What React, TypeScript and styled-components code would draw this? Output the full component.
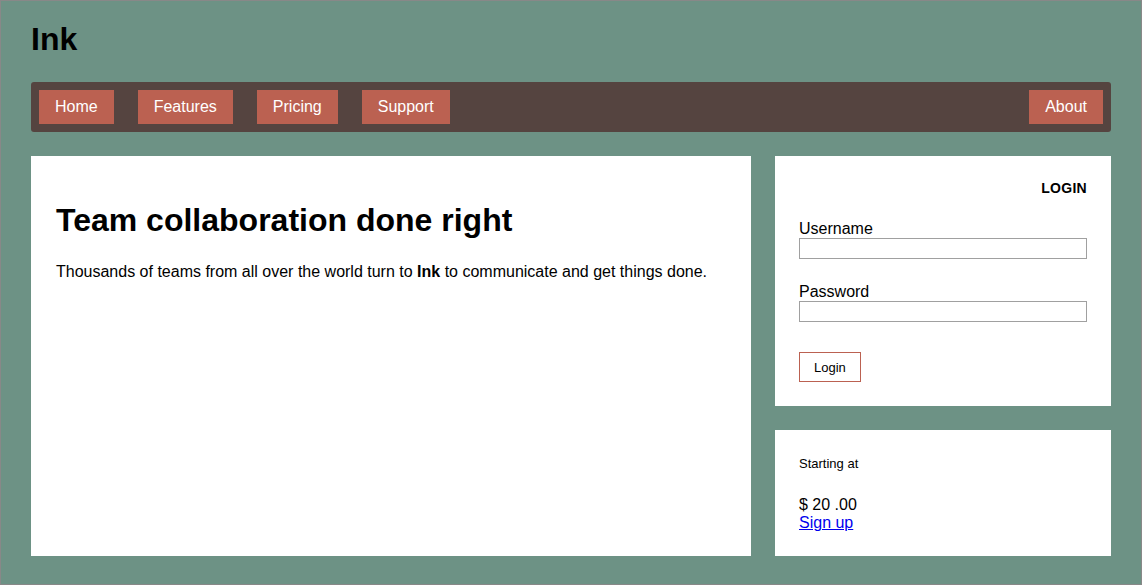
import React from 'react';
import styled, { createGlobalStyle } from 'styled-components';

const GlobalStyle = createGlobalStyle`
  html, body {
    margin: 0;
    padding: 0;
  }
  body {
    font-family: 'Liberation Sans', Arial, sans-serif;
    color: #000;
  }
  * {
    box-sizing: border-box;
  }
`;

const Page = styled.div`
  height: 585px;
  border: 1px solid #888888;
  background: #6d9285;
  padding: 20px 30px 0;
  display: flex;
  flex-direction: column;
  gap: 24px;
`;

const Brand = styled.h1`
  margin: 0;
  font-size: 32px;
  font-weight: bold;
  line-height: 37px;
`;

const NavBar = styled.nav`
  display: flex;
  align-items: center;
  gap: 24px;
  height: 50px;
  padding: 0 8px;
  background: #554440;
  border-radius: 3px;
`;

const NavItem = styled.a<{ $pushRight?: boolean }>`
  display: block;
  height: 34px;
  padding: 0 16px;
  line-height: 34px;
  font-size: 16px;
  color: #fff;
  background: #bb6151;
  text-decoration: none;
  cursor: pointer;
  margin-left: ${(props) => (props.$pushRight ? 'auto' : '0')};
`;

const Main = styled.div`
  display: grid;
  grid-template-columns: 720px 336px;
  grid-template-rows: 400px;
  gap: 24px;
`;

const Card = styled.section<{ $grow?: boolean }>`
  background: #fff;
  padding: 24px;
  flex: ${(props) => (props.$grow ? '1' : 'none')};
`;

const HeroCard = styled(Card)`
  padding: 25px;
`;

const Headline = styled.h2`
  margin: 21px 0 24px;
  font-size: 32px;
  line-height: 37px;
  font-weight: bold;
`;

const Lead = styled.p`
  margin: 0;
  font-size: 16px;
  line-height: 18px;
`;

const Sidebar = styled.div`
  display: flex;
  flex-direction: column;
  gap: 24px;
  min-height: 0;
`;

const CardTitle = styled.h3`
  margin: 0 0 23px;
  text-align: right;
  font-size: 14px;
  line-height: 16px;
  font-weight: bold;
  letter-spacing: 0.3px;
`;

const Field = styled.label`
  display: flex;
  flex-direction: column;
  font-size: 16px;
  line-height: 19px;
  margin-bottom: 23px;
`;

const TextInput = styled.input`
  width: 100%;
  height: 21px;
  margin: 0;
  padding: 1px 3px;
  border: 1px solid #a0a0a0;
  font-family: 'Liberation Sans', Arial, sans-serif;
  font-size: 13px;
`;

const SubmitButton = styled.button`
  display: block;
  margin-top: 30px;
  height: 30px;
  padding: 0 14px;
  background: #fff;
  border: 1px solid #bb6151;
  font-family: 'Liberation Sans', Arial, sans-serif;
  font-size: 13px;
  color: #000;
  cursor: pointer;
`;

const Small = styled.p`
  margin: 2px 0 25px;
  font-size: 13px;
  line-height: 15px;
`;

const Price = styled.div`
  font-size: 16px;
  line-height: 18px;
`;

const SignUp = styled.a`
  display: inline-block;
  font-size: 16px;
  line-height: 18px;
  color: #0000ee;
  text-decoration: underline;
`;

export default function App() {
  return (
    <>
      <GlobalStyle />
      <Page>
        <Brand>Ink</Brand>
        <NavBar>
          <NavItem>Home</NavItem>
          <NavItem>Features</NavItem>
          <NavItem>Pricing</NavItem>
          <NavItem>Support</NavItem>
          <NavItem $pushRight>About</NavItem>
        </NavBar>
        <Main>
          <HeroCard>
            <Headline>Team collaboration done right</Headline>
            <Lead>
              Thousands of teams from all over the world turn to <b>Ink</b> to communicate and get
              things done.
            </Lead>
          </HeroCard>
          <Sidebar>
            <Card>
              <CardTitle>LOGIN</CardTitle>
              <form onSubmit={(e) => e.preventDefault()}>
                <Field>
                  Username
                  <TextInput type="text" />
                </Field>
                <Field>
                  Password
                  <TextInput type="password" />
                </Field>
                <SubmitButton type="submit">Login</SubmitButton>
              </form>
            </Card>
            <Card $grow>
              <Small>Starting at</Small>
              <Price>$ 20 .00</Price>
              <SignUp href="#">Sign up</SignUp>
            </Card>
          </Sidebar>
        </Main>
      </Page>
    </>
  );
}
